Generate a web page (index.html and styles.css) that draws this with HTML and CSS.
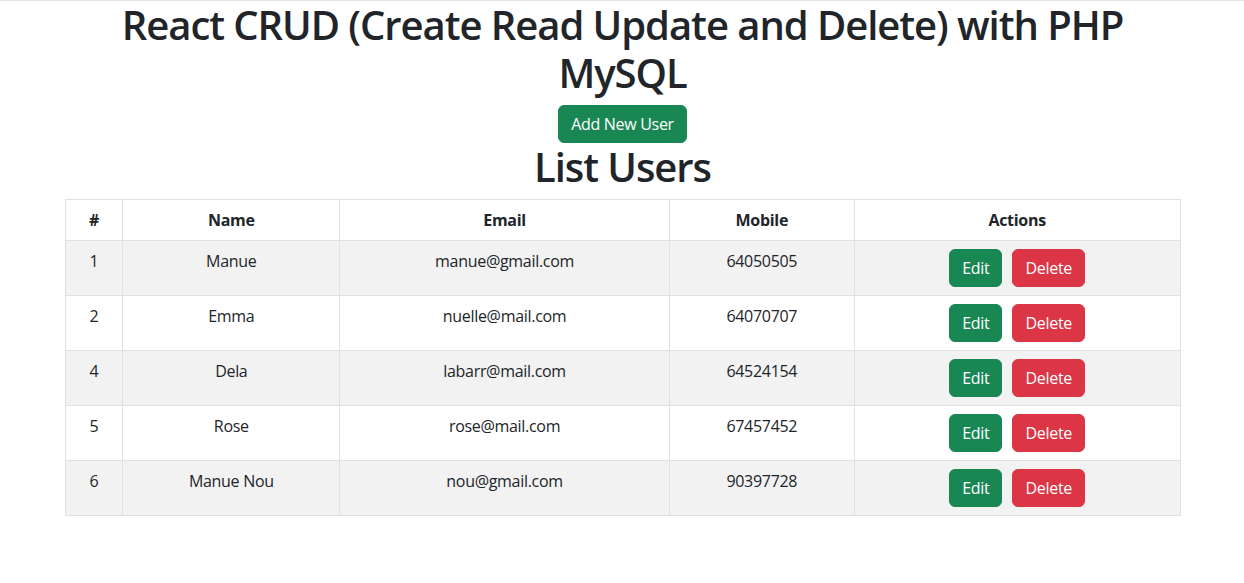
FILE: index.html
```html
<!DOCTYPE html>
<html lang="en">
<head>
<meta charset="utf-8">
<title>React CRUD</title>
<link rel="stylesheet" href="styles.css">
</head>
<body>
<div class="container">
  <h1 class="title">React CRUD (Create Read Update and Delete) with PHP MySQL</h1>
  <div class="add-row"><button class="btn btn-success">Add New User</button></div>
  <h1 class="title">List Users</h1>
  <table class="users">
    <colgroup>
      <col class="c-id"><col class="c-name"><col class="c-email"><col class="c-mobile"><col class="c-actions">
    </colgroup>
    <thead>
      <tr><th>#</th><th>Name</th><th>Email</th><th>Mobile</th><th>Actions</th></tr>
    </thead>
    <tbody>
      <tr class="odd"><td>1</td><td>Manue</td><td>manue@gmail.com</td><td>64050505</td><td><div class="actions"><button class="btn btn-success">Edit</button><button class="btn btn-danger">Delete</button></div></td></tr>
      <tr><td>2</td><td>Emma</td><td>nuelle@mail.com</td><td>64070707</td><td><div class="actions"><button class="btn btn-success">Edit</button><button class="btn btn-danger">Delete</button></div></td></tr>
      <tr class="odd"><td>4</td><td>Dela</td><td>labarr@mail.com</td><td>64524154</td><td><div class="actions"><button class="btn btn-success">Edit</button><button class="btn btn-danger">Delete</button></div></td></tr>
      <tr><td>5</td><td>Rose</td><td>rose@mail.com</td><td>67457452</td><td><div class="actions"><button class="btn btn-success">Edit</button><button class="btn btn-danger">Delete</button></div></td></tr>
      <tr class="odd"><td>6</td><td>Manue Nou</td><td>nou@gmail.com</td><td>90397728</td><td><div class="actions"><button class="btn btn-success">Edit</button><button class="btn btn-danger">Delete</button></div></td></tr>
    </tbody>
  </table>
</div>
</body>
</html>
```
FILE: styles.css
```css
html, body {
  margin: 0;
  padding: 0;
  background: #fff;
}
body {
  border-top: 1px solid #e3e3e3;
  font-family: "Open Sans", "Noto Sans", "Liberation Sans", sans-serif;
  font-size: 16px;
  line-height: 24px;
  letter-spacing: -0.3px;
  color: #212529;
}
.container {
  width: 1116px;
  margin: 0 auto;
  padding-left: 1px;
}
.title {
  margin: 0 0 8px;
  font-size: 40px;
  line-height: 48px;
  font-weight: 600;
  text-align: center;
  color: #212529;
  letter-spacing: -1.05px;
}
.add-row {
  display: flex;
  justify-content: center;
}
.btn {
  font-family: inherit;
  font-size: 16px;
  line-height: 24px;
  letter-spacing: -0.3px;
  padding: 6px 12px;
  border: 1px solid transparent;
  border-radius: 6px;
  color: #fff;
  cursor: pointer;
}
.btn-success {
  background: #198754;
  border-color: #198754;
}
.btn-danger {
  background: #dc3545;
  border-color: #dc3545;
}
.users {
  width: 1116px;
  border-collapse: collapse;
  border: 1px solid #dee2e6;
  margin-bottom: 16px;
}
.c-id { width: 58px; }
.c-name { width: 217px; }
.c-email { width: 330px; }
.c-mobile { width: 185px; }
.c-actions { width: 326px; }
.users th, .users td {
  border: 1px solid #dee2e6;
  padding: 8px;
  text-align: center;
  vertical-align: top;
}
.users th {
  font-weight: 700;
}
.users tr.odd td {
  background: #f2f2f2;
}
.actions {
  display: flex;
  justify-content: center;
  gap: 10px;
}
```
